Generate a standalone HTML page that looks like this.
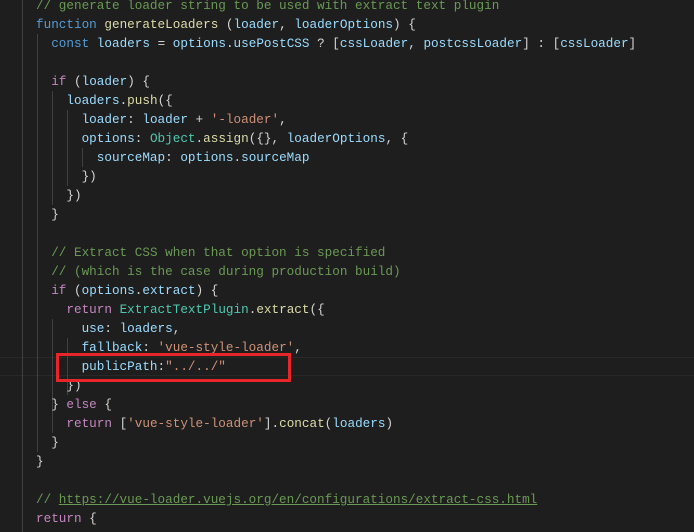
<!DOCTYPE html>
<html><head><style>
body{margin:0;width:694px;height:532px;background:#1e1e1e;overflow:hidden;position:relative;font-family:"Liberation Mono",monospace;font-size:12.67px;}
.l{position:absolute;left:36px;height:19px;line-height:19px;white-space:pre;color:#d4d4d4;}
.c{color:#6a9955}.k{color:#569cd6}.p{color:#c586c0}.v{color:#9cdcfe}.f{color:#dcdcaa}.s{color:#ce9178}.t{color:#4ec9b0}
.g{position:absolute;width:1px;background:#404040}
.box{position:absolute;left:56px;top:353px;width:229px;height:23px;border:3px solid #e8262a}
.hl{position:absolute;left:0;width:694px;height:1px;background:#282828}
</style></head><body>
<div class="hl" style="top:357px"></div><div class="hl" style="top:375px"></div>
<div class="g" style="left:22px;top:0;height:532px"></div>
<div class="g" style="left:37px;top:34px;height:418px"></div>
<div class="g" style="left:52px;top:91px;height:114px"></div>
<div class="g" style="left:52px;top:319px;height:95px"></div>
<div class="g" style="left:52px;top:414px;height:19px"></div>
<div class="g" style="left:67px;top:110px;height:76px"></div>
<div class="g" style="left:67px;top:338px;height:57px"></div>
<div class="g" style="left:82px;top:148px;height:19px"></div>
<div class="l" style="top:-4px"><span class="c">// generate loader string to be used with extract text plugin</span></div>
<div class="l" style="top:15px"><span class="k">function</span> <span class="f">generateLoaders</span> (<span class="v">loader</span>, <span class="v">loaderOptions</span>) {</div>
<div class="l" style="top:34px">  <span class="k">const</span> <span class="v">loaders</span> = <span class="v">options</span>.<span class="v">usePostCSS</span> ? [<span class="v">cssLoader</span>, <span class="v">postcssLoader</span>] : [<span class="v">cssLoader</span>]</div>
<div class="l" style="top:72px">  <span class="p">if</span> (<span class="v">loader</span>) {</div>
<div class="l" style="top:91px">    <span class="v">loaders</span>.<span class="f">push</span>({</div>
<div class="l" style="top:110px">      <span class="v">loader</span>: <span class="v">loader</span> + <span class="s">'-loader'</span>,</div>
<div class="l" style="top:129px">      <span class="v">options</span>: <span class="t">Object</span>.<span class="f">assign</span>({}, <span class="v">loaderOptions</span>, {</div>
<div class="l" style="top:148px">        <span class="v">sourceMap</span>: <span class="v">options</span>.<span class="v">sourceMap</span></div>
<div class="l" style="top:167px">      })</div>
<div class="l" style="top:186px">    })</div>
<div class="l" style="top:205px">  }</div>
<div class="l" style="top:243px">  <span class="c">// Extract CSS when that option is specified</span></div>
<div class="l" style="top:262px">  <span class="c">// (which is the case during production build)</span></div>
<div class="l" style="top:281px">  <span class="p">if</span> (<span class="v">options</span>.<span class="v">extract</span>) {</div>
<div class="l" style="top:300px">    <span class="p">return</span> <span class="t">ExtractTextPlugin</span>.<span class="f">extract</span>({</div>
<div class="l" style="top:319px">      <span class="v">use</span>: <span class="v">loaders</span>,</div>
<div class="l" style="top:338px">      <span class="v">fallback</span>: <span class="s">'vue-style-loader'</span>,</div>
<div class="l" style="top:357px">      <span class="v">publicPath</span>:<span class="s">"../../"</span></div>
<div class="l" style="top:376px">    })</div>
<div class="l" style="top:395px">  } <span class="p">else</span> {</div>
<div class="l" style="top:414px">    <span class="p">return</span> [<span class="s">'vue-style-loader'</span>].<span class="f">concat</span>(<span class="v">loaders</span>)</div>
<div class="l" style="top:433px">  }</div>
<div class="l" style="top:452px">}</div>
<div class="l" style="top:490px"><span class="c">// <u>https://vue-loader.vuejs.org/en/configurations/extract-css.html</u></span></div>
<div class="l" style="top:509px"><span class="p">return</span> {</div>
<div class="box"></div>
</body></html>
